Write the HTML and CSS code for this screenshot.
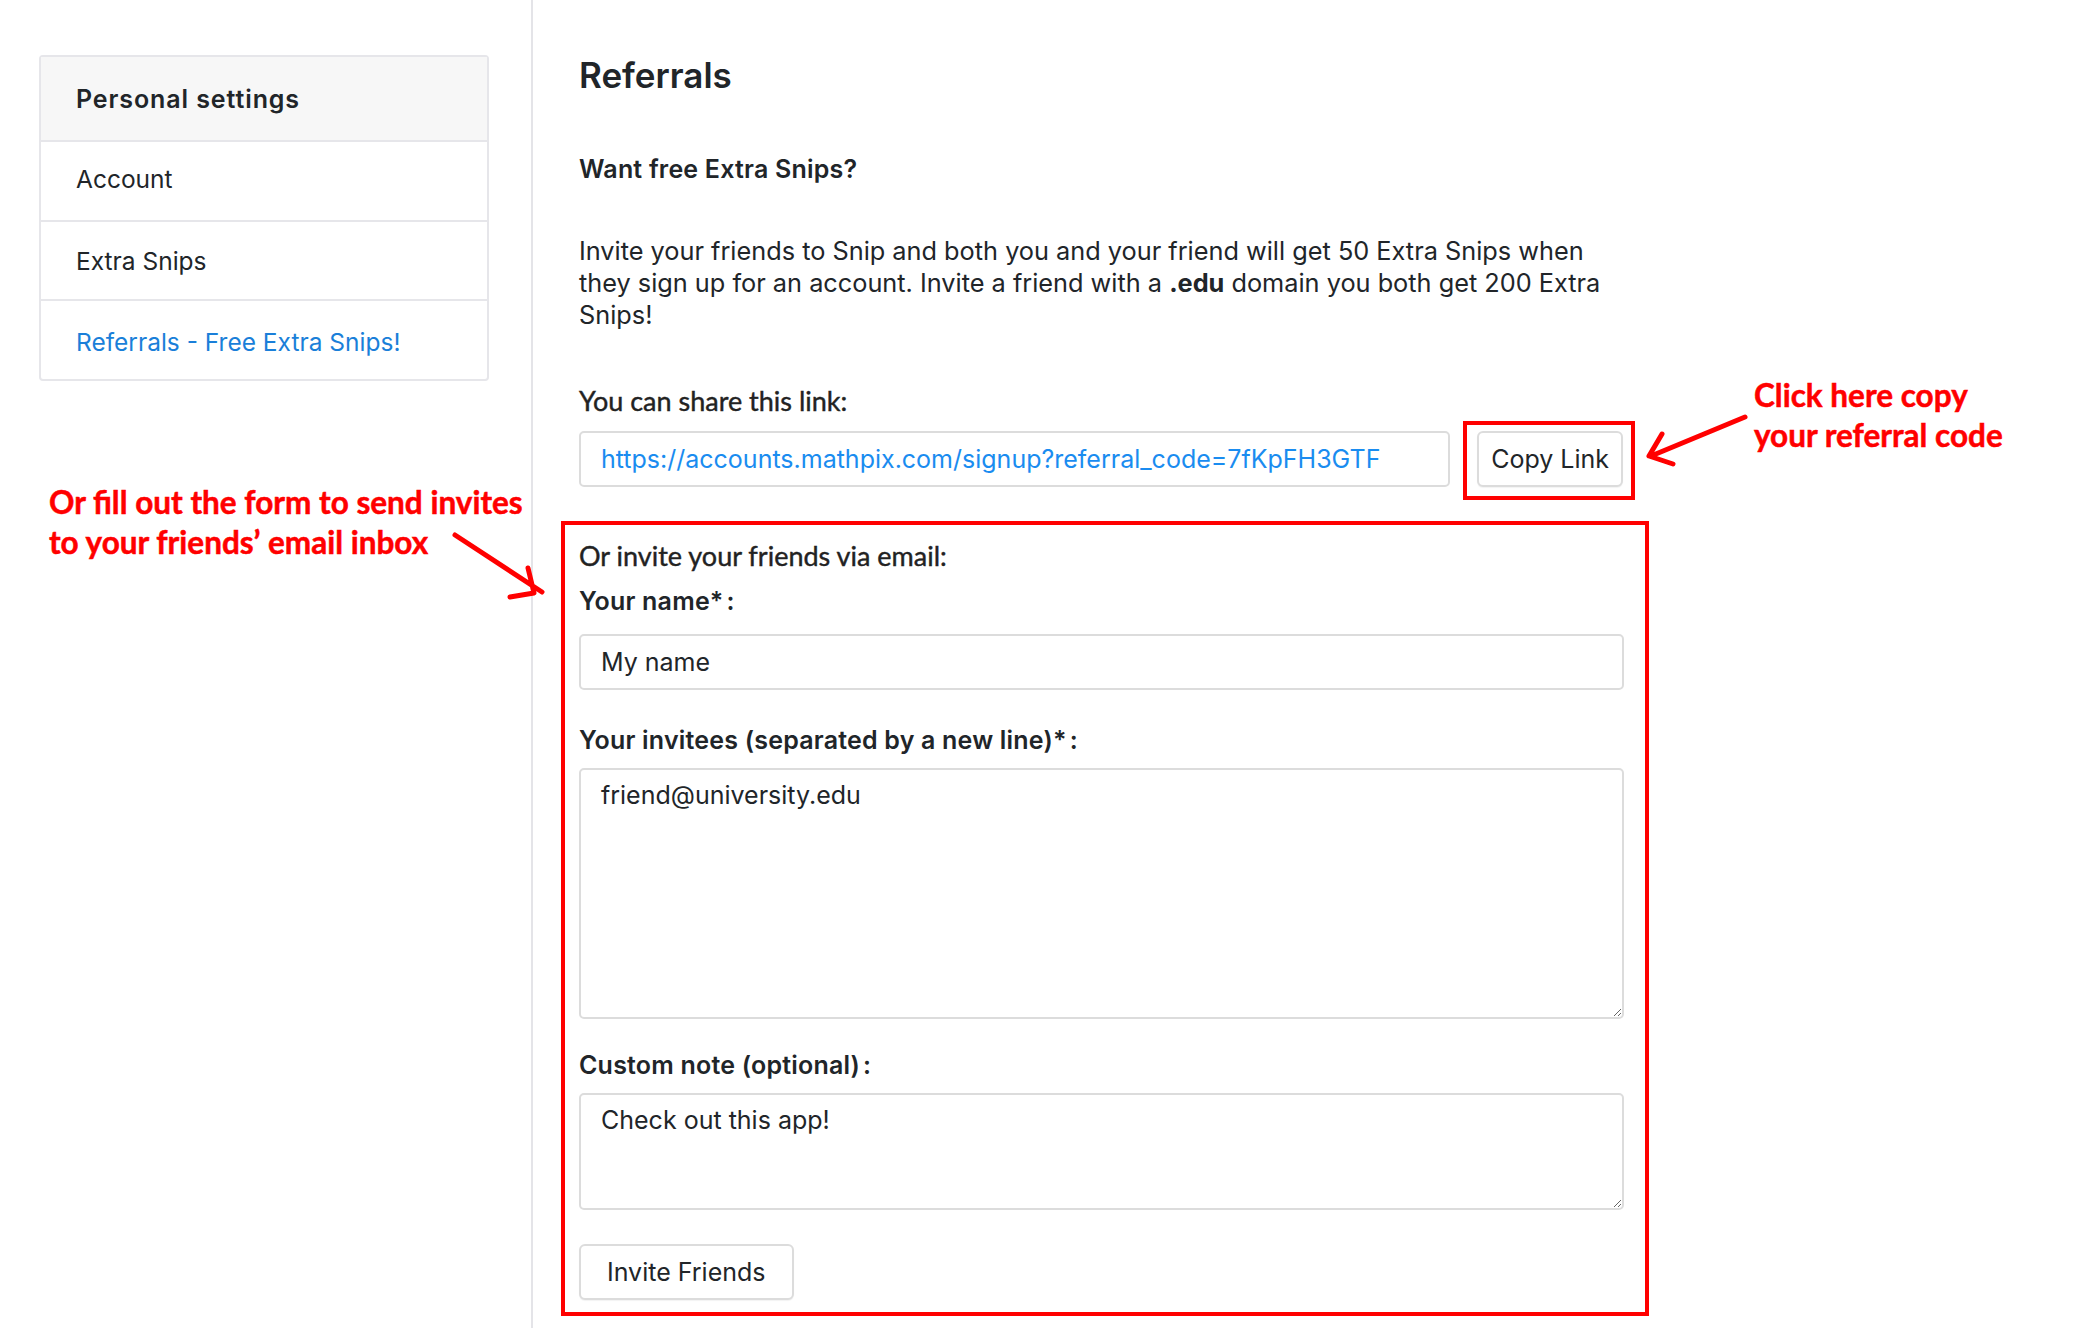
FILE: index.html
```html
<!DOCTYPE html>
<html lang="en">
<head>
  <meta charset="UTF-8" />
  <meta name="viewport" content="width=device-width, initial-scale=1.0"/>
  <title>Referrals</title>
  <link rel="stylesheet" href="styles.css">
</head>
<body>
  <div class="page">
    <aside class="sidebar">
      <nav class="menu">
        <div class="menu-head">Personal settings</div>
        <a class="menu-item" href="#">Account</a>
        <a class="menu-item" href="#">Extra Snips</a>
        <a class="menu-item active" href="#">Referrals - Free Extra Snips!</a>
      </nav>
    </aside>

    <main class="content">
      <h1>Referrals</h1>
      <h2 class="lead">Want free Extra Snips?</h2>
      <p class="intro">Invite your friends to Snip and both you and your friend will get 50 Extra Snips when they sign up for an account. Invite a friend with a <b>.edu</b> domain you both get 200 Extra Snips!</p>

      <div class="label-alt">You can share this link:</div>
      <div class="link-row">
        <div class="field link-field">https://accounts.mathpix.com/signup?referral_code=7fKpFH3GTF</div>
        <div class="callout">
          <button class="btn">Copy Link</button>
        </div>
      </div>

      <form class="invite-box">
        <div class="label-alt">Or invite your friends via email:</div>
        <label class="label" for="name">Your name*<span class="colon">:</span></label>
        <input class="field" id="name" type="text" value="My name" />

        <label class="label gap" for="invitees">Your invitees (separated by a new line)*<span class="colon">:</span></label>
        <textarea class="field area-big" id="invitees">friend@university.edu</textarea>

        <label class="label gap" for="note">Custom note (optional)<span class="colon">:</span></label>
        <textarea class="field area-small" id="note">Check out this app!</textarea>

        <button class="btn invite" type="button">Invite Friends</button>
      </form>
    </main>
  </div>

  <!-- annotations -->
  <div class="note note-left">Or fill out the form to send invites<br>to your friends’ email inbox</div>
  <div class="note note-right">Click here copy<br>your referral code</div>

  <svg class="arrow arrow-left" width="120" height="90" viewBox="0 0 120 90">
    <path d="M5 5 L92 62 M78 38 L84 63 L60 67" fill="none" stroke="#f00" stroke-width="5" stroke-linecap="round" stroke-linejoin="round"/>
  </svg>
  <svg class="arrow arrow-right" width="120" height="70" viewBox="0 0 120 70">
    <path d="M105 6 L11 45 M22 23 L9 45 L33 53" fill="none" stroke="#f00" stroke-width="5" stroke-linecap="round" stroke-linejoin="round"/>
  </svg>
</body>
</html>
```

FILE: styles.css
```css
body { margin: 0; font-family: Inter, "Liberation Sans", sans-serif; color: #212529; background: #fff; }
.page { display: flex; min-height: 1328px; }

.sidebar { width: 533px; border-right: 2px solid #e4e4e8; box-sizing: border-box; padding: 55px 0 0 39px; }
.menu { width: 446px; border: 2px solid #e6e6ea; border-radius: 4px; display: flex; flex-direction: column; }
.menu-head { background: #f7f7f7; height: 83px; display: flex; align-items: center; padding-left: 35px; font-weight: 600; font-size: 25px; letter-spacing: 0.9px; border-bottom: 2px solid #e6e6ea; }
.menu-item { height: 77px; display: flex; align-items: center; padding-left: 35px; font-size: 24.5px; color: #212529; text-decoration: none; border-bottom: 2px solid #e6e6ea; }
.menu-item:first-of-type { padding-bottom: 4px; box-sizing: border-box; height: 80px; }
.menu-item:last-child { border-bottom: none; height: 78px; padding-top: 3px; box-sizing: border-box; }
.menu-item.active { color: #1a7fd9; }

.content { padding: 0 0 0 46px; width: 1044px; }
h1 { font-size: 35px; font-weight: 600; margin: 52px 0 0; line-height: 46px; }
.lead { font-size: 25px; font-weight: 600; letter-spacing: 0.2px; margin: 55px 0 0; line-height: 32px; }
.intro { font-size: 25.3px; line-height: 32px; margin: 50px 0 0; width: 1030px; }
.intro b { font-weight: 700; }

.label-alt { font-family: Lato, "Open Sans", sans-serif; font-size: 27px; line-height: 34px; margin-top: 53px; color: #222; -webkit-text-stroke: 0.4px #222; }
.link-row { display: flex; align-items: flex-start; margin-top: 13px; }
.field { box-sizing: border-box; border: 2px solid #dcdcdc; border-radius: 5px; background: #fff; font-family: Inter, "Liberation Sans", sans-serif; font-size: 25px; color: #212529; padding: 0 20px; width: 100%; display: block; }
.link-field { flex: 1; height: 56px; display: flex; align-items: center; color: #1a8cf0; }
.callout { border: 4px solid #f00; padding: 6px 8px 9px 10px; margin: -10px -12px 0 13px; }

.btn { font-family: Inter, "Liberation Sans", sans-serif; font-size: 25px; color: #212529; background: #fff; border: 2px solid #dcdcdc; border-radius: 6px; height: 56px; padding: 0 12px; box-shadow: 0 1px 1px rgba(0,0,0,0.05); }

.invite-box { border: 4px solid #f00; margin: 21px 0 0 -18px; width: 1088px; box-sizing: border-box; padding: 0 21px 12px 14px; }
.invite-box .label-alt { margin-top: 14px; }
.label { display: block; font-size: 25px; font-weight: 600; letter-spacing: 0.2px; line-height: 32px; margin: 12px 0 17px; }
.label .colon { margin-left: 3px; }
.label.gap { margin-top: 34px; margin-bottom: 12px; }
input.field { height: 56px; }
textarea.field { padding-top: 10px; line-height: 30px; resize: vertical; }
.area-big { height: 251px; }
.area-small { height: 117px; }
.area-big + .label.gap { margin-top: 30px; }
.invite { margin-top: 34px; padding: 0 26px; }

.note { position: absolute; font-family: Lato, "Open Sans", sans-serif; font-weight: 700; color: #f00; font-size: 31.5px; line-height: 40px; -webkit-text-stroke: 0.5px #f00; }
.note-left { left: 49px; top: 482px; }
.note-right { left: 1754px; top: 375px; }
.arrow { position: absolute; }
.arrow-left { left: 450px; top: 530px; }
.arrow-right { left: 1640px; top: 411px; }
```
